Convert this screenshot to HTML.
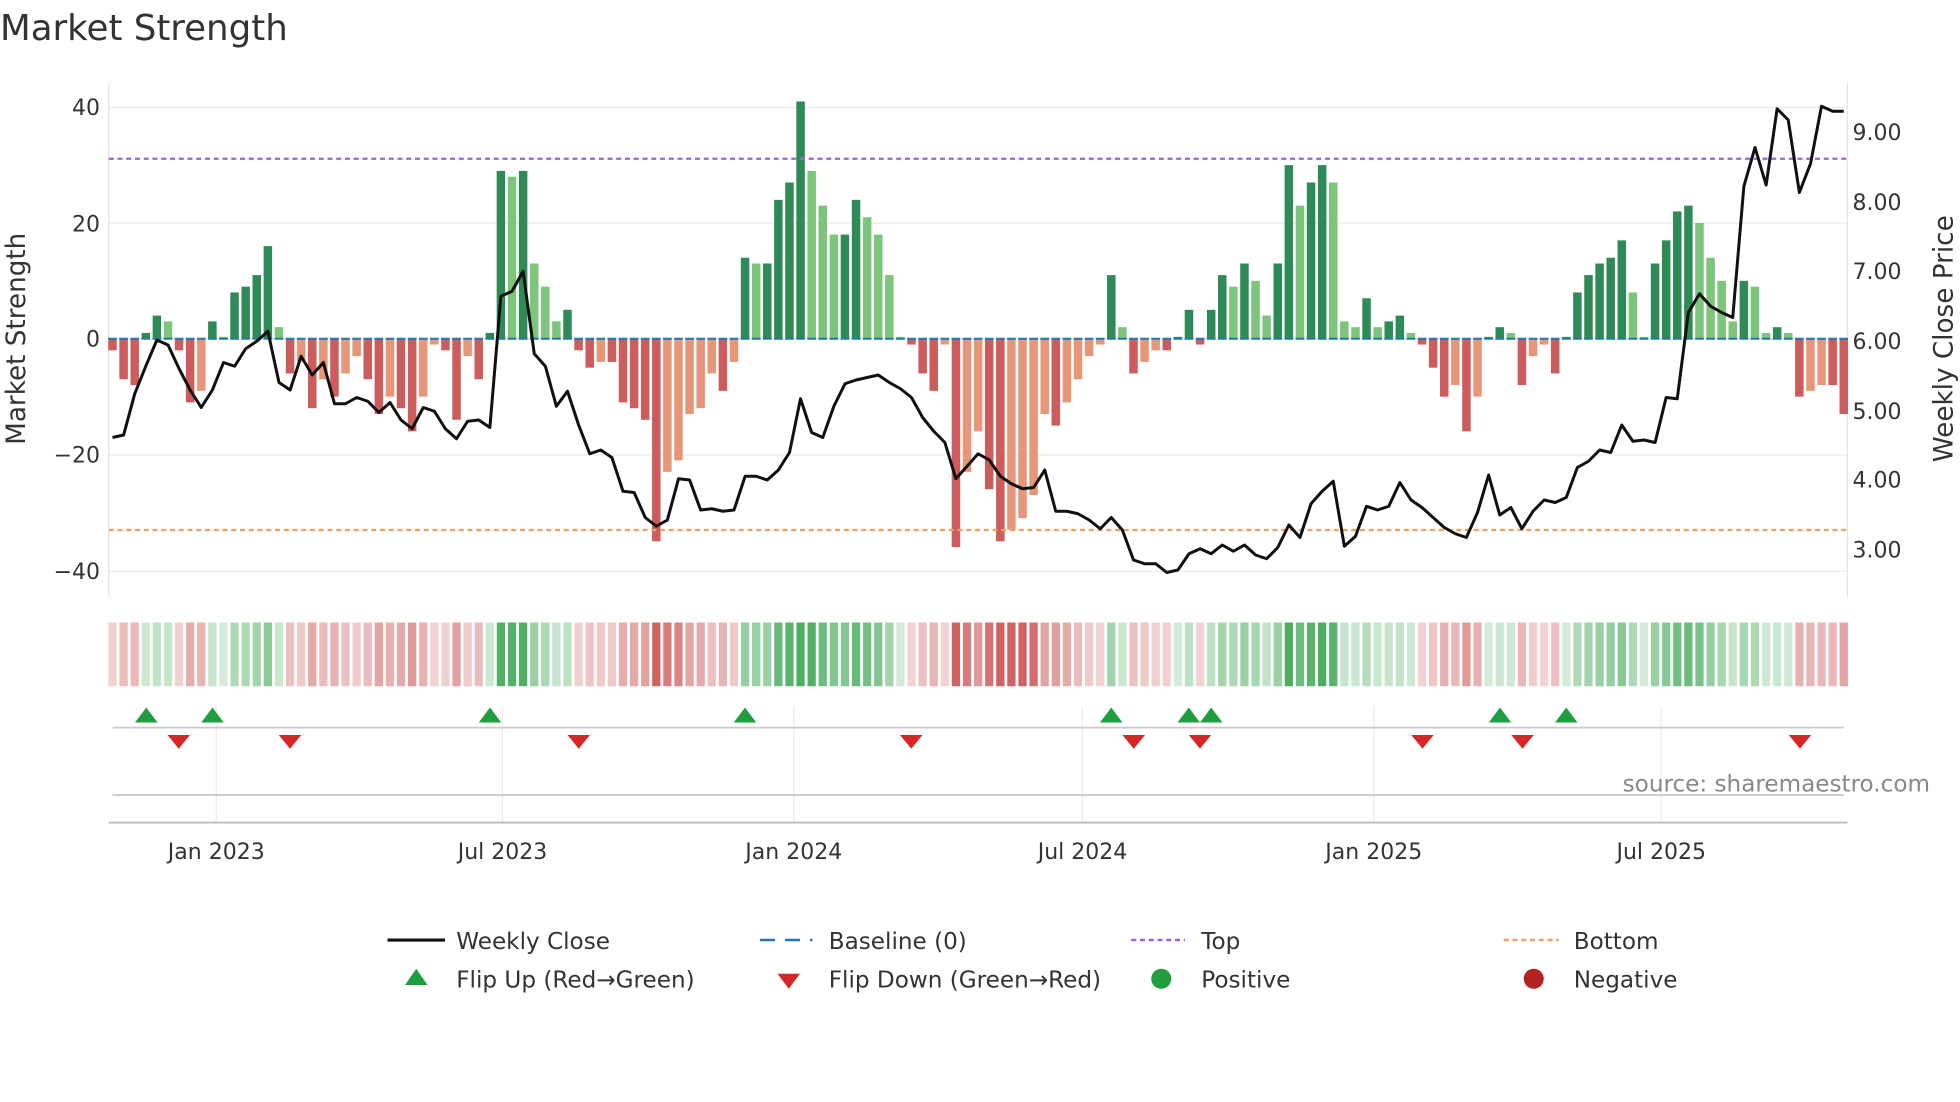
<!DOCTYPE html>
<html><head><meta charset="utf-8">
<style>
html,body{margin:0;padding:0;background:#fff;}
svg{display:block;font-family:"DejaVu Sans","Liberation Sans",sans-serif;}
</style></head>
<body>
<svg id="c" width="1960" height="1102" viewBox="0 0 1568 881.6" xmlns="http://www.w3.org/2000/svg">
<rect width="1568" height="881.6" fill="#fff"/>
<text x="0" y="32" font-size="28.5" fill="#333">Market Strength</text>
<g id="grid"></g>
<g id="heat"></g>
<g id="bars"></g>
<line x1="87" y1="127" x2="1478" y2="127" stroke="#9a66d8" stroke-width="1.8" stroke-dasharray="4,3"/>
<line x1="87" y1="424" x2="1478" y2="424" stroke="#f0a060" stroke-width="1.8" stroke-dasharray="4,3"/>
<polyline id="price" fill="none" stroke="#111" stroke-width="2.4" stroke-linejoin="round"/>
<g id="marks"></g>
<g font-size="17.6" fill="#333">
<text x="80" y="92" text-anchor="end">40</text>
<text x="80" y="185" text-anchor="end">20</text>
<text x="80" y="277" text-anchor="end">0</text>
<text x="80" y="370" text-anchor="end">−20</text>
<text x="80" y="463" text-anchor="end">−40</text>
<text x="1482" y="112">9.00</text>
<text x="1482" y="168">8.00</text>
<text x="1482" y="223">7.00</text>
<text x="1482" y="279">6.00</text>
<text x="1482" y="335">5.00</text>
<text x="1482" y="390">4.00</text>
<text x="1482" y="446">3.00</text>
<text x="173" y="687" text-anchor="middle">Jan 2023</text>
<text x="402" y="687" text-anchor="middle">Jul 2023</text>
<text x="635" y="687" text-anchor="middle">Jan 2024</text>
<text x="866" y="687" text-anchor="middle">Jul 2024</text>
<text x="1099" y="687" text-anchor="middle">Jan 2025</text>
<text x="1329" y="687" text-anchor="middle">Jul 2025</text>
</g>
<text transform="translate(20,271) rotate(-90)" text-anchor="middle" font-size="21" fill="#333">Market Strength</text>
<text transform="translate(1562,271) rotate(-90)" text-anchor="middle" font-size="21" fill="#333">Weekly Close Price</text>
<text x="1544" y="633" text-anchor="end" font-size="18.5" fill="#888">source: sharemaestro.com</text>
<g font-size="18.5" fill="#333">
<line x1="310" y1="752" x2="356" y2="752" stroke="#111" stroke-width="2.5"/>
<text x="365" y="759">Weekly Close</text>
<line x1="608" y1="752" x2="650" y2="752" stroke="#1f77b4" stroke-width="2" stroke-dasharray="12,8"/>
<text x="663" y="759">Baseline (0)</text>
<line x1="905" y1="752" x2="948" y2="752" stroke="#9a66d8" stroke-width="2" stroke-dasharray="4,3"/>
<text x="961" y="759">Top</text>
<line x1="1203" y1="752" x2="1247" y2="752" stroke="#f0a060" stroke-width="2" stroke-dasharray="4,3"/>
<text x="1259" y="759">Bottom</text>
<polygon points="324,788 342,788 333,775" fill="#1f9e3f"/>
<text x="365" y="790">Flip Up (Red→Green)</text>
<polygon points="622,779 640,779 631,791" fill="#d62728"/>
<text x="663" y="790">Flip Down (Green→Red)</text>
<circle cx="929" cy="783" r="8" fill="#1f9e3f"/>
<text x="961" y="790">Positive</text>
<circle cx="1227" cy="783" r="8" fill="#b22222"/>
<text x="1259" y="790">Negative</text>
</g>
</svg>
<script>
var NS="http://www.w3.org/2000/svg";
function el(p,t,a){var e=document.createElementNS(NS,t);for(var k in a)e.setAttribute(k,a[k]);document.getElementById(p).appendChild(e);return e;}
var v=[-2,-7,-8,1,4,3,-2,-11,-9,3,0,8,9,11,16,2,-6,-4,-12,-7,-10,-6,-3,-7,-13,-10,-12,-16,-10,-1,-2,-14,-3,-7,1,29,28,29,13,9,3,5,-2,-5,-4,-4,-11,-12,-14,-35,-23,-21,-13,-12,-6,-9,-4,14,13,13,24,27,41,29,23,18,18,24,21,18,11,0,-1,-6,-9,-1,-36,-23,-16,-26,-35,-33,-31,-27,-13,-15,-11,-7,-3,-1,11,2,-6,-4,-2,-2,0,5,-1,5,11,9,13,10,4,13,30,23,27,30,27,3,2,7,2,3,4,1,-1,-5,-10,-8,-16,-10,0,2,1,-8,-3,-1,-6,0,8,11,13,14,17,8,0,13,17,22,23,20,14,10,3,10,9,1,2,1,-10,-9,-8,-8,-13];
var py=[350,348,315,293,272,276,295,312,326,312,290,293,279,273,265,306,312,285,300,290,323,323,318,321,330,322,336,343,326,329,343,351,337,336,342,237,233,217,283,293,325,313,340,363,360,366,393,394,414,421,416,383,384,408,407,409,408,381,381,384,376,362,319,346,350,325,307,304,302,300,306,311,318,334,345,354,383,373,363,368,381,387,391,390,376,409,409,411,416,423,414,424,448,451,451,458,456,443,439,443,436,441,436,444,447,438,420,430,403,393,385,437,429,405,408,405,386,400,406,414,422,427,430,410,380,412,406,423,409,400,402,398,374,369,360,362,340,353,352,354,318,319,250,235,245,250,254,149,118,148,87,96,154,131,85,89,89];
var n=v.length,x0=90,dx=(1475-90)/(n-1),z=271,k=4.63;
[86,178.5,271,364,457].forEach(function(y){el("grid","line",{x1:87,x2:1478,y1:y,y2:y,stroke:"#ececec","stroke-width":1});});
[173,402,635,866,1099,1329].forEach(function(x){el("grid","line",{x1:x,x2:x,y1:565,y2:658,stroke:"#ececec","stroke-width":1});});
el("grid","line",{x1:87,x2:87,y1:66,y2:478,stroke:"#e4e4e4"});
el("grid","line",{x1:1478,x2:1478,y1:66,y2:478,stroke:"#e4e4e4"});
el("grid","line",{x1:90,x2:1475,y1:582,y2:582,stroke:"#ccc","stroke-width":1.5});
el("grid","line",{x1:90,x2:1475,y1:636,y2:636,stroke:"#ccc","stroke-width":1.5});
el("grid","line",{x1:87,x2:1478,y1:658,y2:658,stroke:"#bbb","stroke-width":1.5});
var pts=[];
for(var i=0;i<n;i++){
 var x=x0+i*dx,val=v[i],p=i?v[i-1]:0,c;
 if(val>=0)c=(val>=p)?"#2e8b57":"#7dc47d"; else c=(val<=p)?"#cd5c5c":"#e8967a";
 var h=Math.abs(val)*k; if(h<1.5)h=1.5;
 el("bars","rect",{x:x-3.4,width:6.8,y:val>=0?z-h:z,height:h,fill:c});
 var a=Math.min(1,0.25+Math.abs(val)/40);
 var hc=val>=0?"rgba(46,160,70,"+a*0.85+")":"rgba(200,70,70,"+a*0.85+")";
 el("heat","rect",{x:x-3.3,width:6.6,y:498,height:51,fill:hc});
 el("bars","line",{x1:x-3.5,x2:x+3.5,y1:z,y2:z,stroke:"#1f77b4","stroke-width":1.6});
 pts.push(x.toFixed(1)+","+py[i]);
}
document.getElementById("price").setAttribute("points",pts.join(" "));
[117,170,392,596,889,951,969,1200,1253].forEach(function(x){el("marks","polygon",{points:(x-9)+",578 "+(x+9)+",578 "+x+",566",fill:"#1f9e3f"});});
[143,232,463,729,907,960,1138,1218,1440].forEach(function(x){el("marks","polygon",{points:(x-9)+",588 "+(x+9)+",588 "+x+",599",fill:"#d62728"});});
</script>
</body></html>
